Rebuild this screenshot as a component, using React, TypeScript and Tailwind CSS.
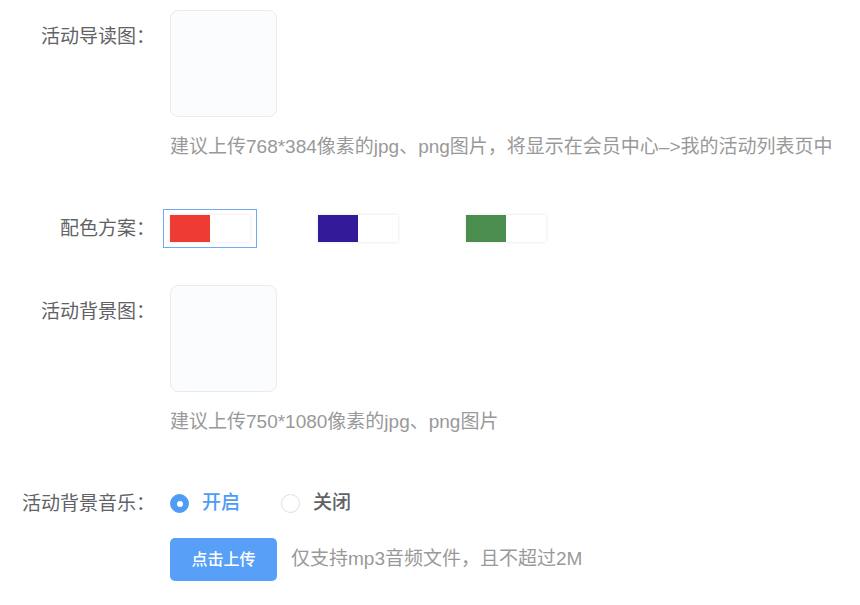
import React, { useState } from 'react';

const schemes = [
  { id: 'red', color: 'bg-[#ee3b33]' },
  { id: 'purple', color: 'bg-[#331a98]' },
  { id: 'green', color: 'bg-[#4b8c4f]' },
];

function Label({ children }: { children: React.ReactNode }) {
  return (
    <div className="w-[155px] shrink-0 text-right leading-[53px] text-[#606266] mr-[15px]">
      {children}
    </div>
  );
}

function UploadBox() {
  return <div className="w-[107px] h-[107px] rounded-[8px] border border-[#e8ebef] bg-[#fbfcfe]" />;
}

export default function App() {
  const [scheme, setScheme] = useState('red');
  const [music, setMusic] = useState(true);

  return (
    <div
      className="min-h-screen bg-white pt-[10px] text-[19px]"
      style={{ fontFamily: '"Liberation Sans", "Noto Sans CJK SC", sans-serif' }}
    >
      {/* 活动导读图 */}
      <div className="flex mb-[29px]">
        <Label>活动导读图：</Label>
        <div>
          <UploadBox />
          <div className="mt-[3px] leading-[53px] text-[#999999] whitespace-nowrap">
            建议上传768*384像素的jpg、png图片，将显示在会员中心–&gt;我的活动列表页中
          </div>
        </div>
      </div>

      {/* 配色方案 */}
      <div className="flex mb-[30px]">
        <Label>配色方案：</Label>
        <div className="flex items-center h-[53px] -ml-[7px]">
          {schemes.map((s) => (
            <button
              key={s.id}
              onClick={() => setScheme(s.id)}
              className={`w-[94px] h-[39px] mr-[54px] flex items-center pl-[6px] border ${
                scheme === s.id ? 'border-[#72a9f0]' : 'border-transparent'
              }`}
            >
              <span className="flex w-[80px] h-[27px] shadow-[0_0_3px_rgba(0,0,0,0.12)]">
                <span className={`w-[40px] h-full ${s.color}`} />
                <span className="w-[40px] h-full bg-white" />
              </span>
            </button>
          ))}
        </div>
      </div>

      {/* 活动背景图 */}
      <div className="flex mb-[29px]">
        <Label>活动背景图：</Label>
        <div>
          <UploadBox />
          <div className="mt-[3px] leading-[53px] text-[#999999]">
            建议上传750*1080像素的jpg、png图片
          </div>
        </div>
      </div>

      {/* 活动背景音乐 */}
      <div className="flex">
        <Label>活动背景音乐：</Label>
        <div>
          <div className="flex items-center h-[53px] font-medium">
            <button onClick={() => setMusic(true)} className="flex items-center mr-[41px]">
              <span
                className={`w-[19px] h-[19px] rounded-full flex items-center justify-center border ${
                  music ? 'bg-[#4f9cf6] border-[#4f9cf6]' : 'bg-white border-[#dcdfe6]'
                }`}
              >
                {music && <span className="w-[6px] h-[6px] rounded-full bg-white" />}
              </span>
              <span className={`ml-[13px] ${music ? 'text-[#4f9cf6]' : 'text-[#606266]'}`}>开启</span>
            </button>
            <button onClick={() => setMusic(false)} className="flex items-center">
              <span
                className={`w-[19px] h-[19px] rounded-full flex items-center justify-center border ${
                  !music ? 'bg-[#4f9cf6] border-[#4f9cf6]' : 'bg-white border-[#dcdfe6]'
                }`}
              >
                {!music && <span className="w-[6px] h-[6px] rounded-full bg-white" />}
              </span>
              <span className={`ml-[13px] ${!music ? 'text-[#4f9cf6]' : 'text-[#606266]'}`}>关闭</span>
            </button>
          </div>
          <div className="flex items-center mt-[8px]">
            <button className="w-[107px] h-[43px] rounded-[5px] bg-[#58a0f7] text-white text-[16px] font-medium">
              点击上传
            </button>
            <span className="ml-[14px] text-[#999999]">仅支持mp3音频文件，且不超过2M</span>
          </div>
        </div>
      </div>
    </div>
  );
}
